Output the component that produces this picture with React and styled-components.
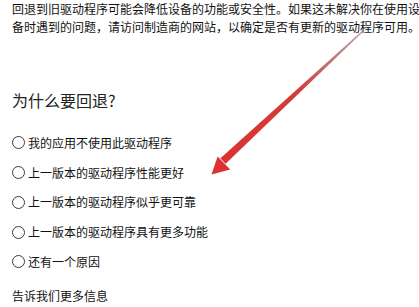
import styled, { createGlobalStyle } from "styled-components";

const GlobalStyle = createGlobalStyle`
  html, body {
    margin: 0;
    padding: 0;
    background: #ffffff;
    overflow: hidden;
  }
  body {
    font-family: "Noto Sans CJK SC", "Liberation Sans", sans-serif;
    color: #111111;
  }
`;

const reasons = [
  "我的应用不使用此驱动程序",
  "上一版本的驱动程序性能更好",
  "上一版本的驱动程序似乎更可靠",
  "上一版本的驱动程序具有更多功能",
  "还有一个原因",
];

const App = () => {
  return (
    <>
      <GlobalStyle />
      <Page>
        <Intro>
          回退到旧驱动程序可能会降低设备的功能或安全性。如果这未解决你在使用设备时遇到的问题，请访问制造商的网站，以确定是否有更新的驱动程序可用。
        </Intro>
        <Heading>为什么要回退?</Heading>
        <ReasonList>
          {reasons.map((r) => (
            <Reason key={r}>
              <RadioDot />
              <span>{r}</span>
            </Reason>
          ))}
        </ReasonList>
        <MoreInfo>告诉我们更多信息</MoreInfo>
        <Arrow width="419" height="307" viewBox="0 0 419 307">
          <defs>
            <linearGradient id="shaft" x1="222" y1="160" x2="364" y2="30" gradientUnits="userSpaceOnUse">
              <stop offset="0" stopColor="#dc3232" />
              <stop offset="0.55" stopColor="#d23c3c" />
              <stop offset="1" stopColor="#8e6a70" stopOpacity="0.6" />
            </linearGradient>
            <filter id="soft">
              <feGaussianBlur stdDeviation="0.6" />
            </filter>
          </defs>
          <g filter="url(#soft)">
            <polygon points="220.4,158.2 363.6,29.6 364.4,30.4 225.6,163.8" fill="url(#shaft)" />
            <polygon points="211.5,174.5 217.6,156.4 230.2,169.6" fill="#dc3232" />
          </g>
        </Arrow>
      </Page>
    </>
  );
};

export default App;

const Page = styled.div`
  position: relative;
  width: 419px;
  height: 307px;
  padding-left: 12px;
  box-sizing: border-box;
  display: flex;
  flex-direction: column;
`;

const Intro = styled.p`
  margin: 0;
  width: 412px;
  font-size: 12px;
  line-height: 18px;
`;

const Heading = styled.h2`
  margin: 52px 0 0;
  font-size: 16px;
  line-height: 24px;
  font-weight: 400;
  color: #222222;
`;

const ReasonList = styled.div`
  margin-top: 16px;
  display: flex;
  flex-direction: column;
`;

const Reason = styled.label`
  display: flex;
  align-items: center;
  gap: 3px;
  height: 29.75px;
  font-size: 12px;
  line-height: 18px;
`;

const RadioDot = styled.span`
  width: 11px;
  height: 11px;
  border: 1px solid #3a3a3a;
  border-radius: 50%;
  flex: none;
`;

const MoreInfo = styled.div`
  margin-top: 10px;
  font-size: 12px;
  line-height: 18px;
`;

const Arrow = styled.svg`
  position: absolute;
  left: 0;
  top: 0;
  pointer-events: none;
`;
